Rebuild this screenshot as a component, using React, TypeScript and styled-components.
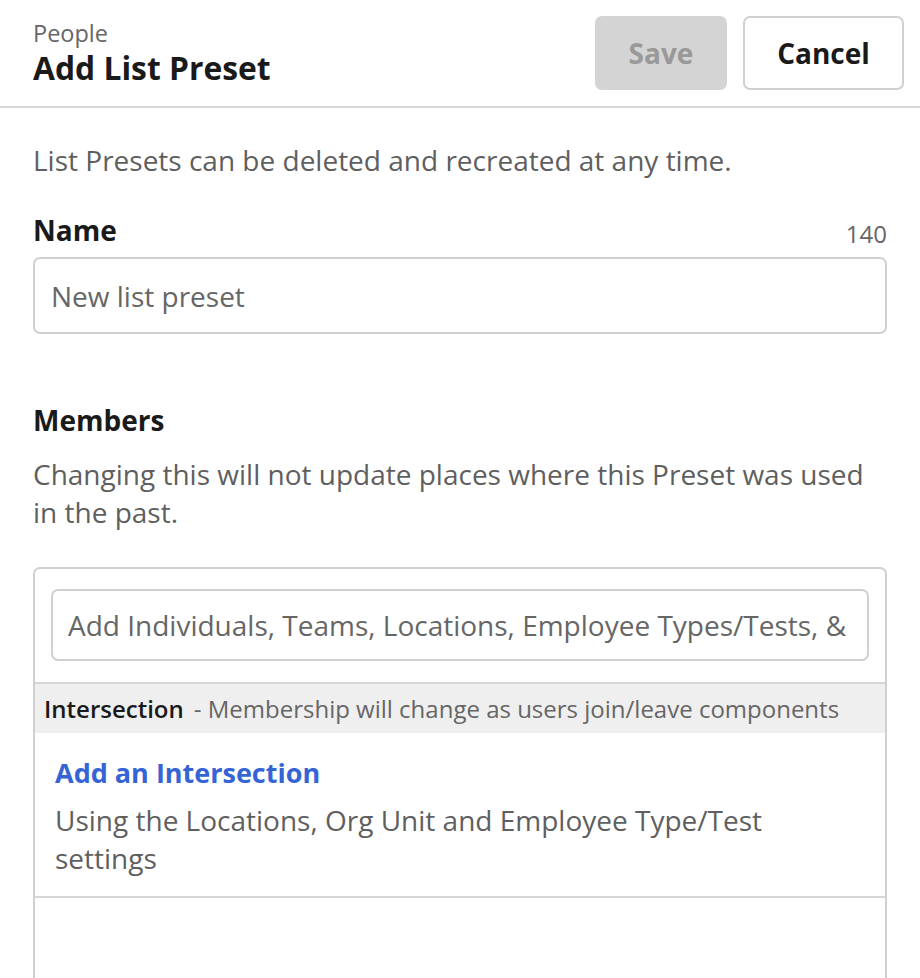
import React from 'react'
import styled, { createGlobalStyle } from 'styled-components'

const GlobalStyle = createGlobalStyle`
    html, body {
        margin: 0;
        padding: 0;
        background: #fff;
    }
    body {
        font-family: "Open Sans", "Noto Sans", sans-serif;
        color: #1a1a1a;
    }
    * {
        box-sizing: border-box;
    }
`

const App: React.FC = () => {
    return (
        <Page>
            <GlobalStyle />
            <Header>
                <Titles>
                    <Crumb>People</Crumb>
                    <Title>Add List Preset</Title>
                </Titles>
                <Actions>
                    <SaveButton disabled>Save</SaveButton>
                    <CancelButton>Cancel</CancelButton>
                </Actions>
            </Header>

            <Body>
                <Hint>List Presets can be deleted and recreated at any time.</Hint>

                <NameField>
                    <LabelRow>
                        <FieldLabel>Name</FieldLabel>
                        <Counter>140</Counter>
                    </LabelRow>
                    <TextInput placeholder="New list preset" />
                </NameField>

                <MembersField>
                    <FieldLabel>Members</FieldLabel>
                    <Description>
                        Changing this will not update places where this Preset was used in the past.
                    </Description>
                    <MembersBox>
                        <SearchWrap>
                            <SearchInput placeholder="Add Individuals, Teams, Locations, Employee Types/Tests, & more" />
                        </SearchWrap>
                        <GroupHeader>
                            <strong>Intersection</strong>
                            <span>- Membership will change as users join/leave components</span>
                        </GroupHeader>
                        <GroupBody>
                            <AddLink href="#">Add an Intersection</AddLink>
                            <GroupNote>Using the Locations, Org Unit and Employee Type/Test settings</GroupNote>
                        </GroupBody>
                        <EmptyArea />
                    </MembersBox>
                </MembersField>
            </Body>
        </Page>
    )
}

const Page = styled.div`
    width: 920px;
    height: 978px;
    overflow: hidden;
    background: #fff;
`

const Header = styled.header`
    display: flex;
    align-items: center;
    justify-content: space-between;
    padding: 16px 16px 16px 33px;
    border-bottom: 2px solid #d6d6d6;
`

const Titles = styled.div`
    display: flex;
    flex-direction: column;
`

const Crumb = styled.span`
    font-size: 23.5px;
    line-height: 30px;
    color: #666;
`

const Title = styled.h1`
    margin: 0;
    font-size: 31.8px;
    line-height: 40px;
    font-weight: 700;
    color: #1a1a1a;
`

const Actions = styled.div`
    display: flex;
    gap: 16px;
`

const Button = styled.button`
    height: 74px;
    padding: 0;
    font-family: inherit;
    font-size: 28px;
    font-weight: 700;
    border-radius: 7px;
    cursor: pointer;
`

const SaveButton = styled(Button)`
    width: 132px;
    background: #d4d4d4;
    border: 2px solid #d4d4d4;
    color: #999;
    cursor: default;
`

const CancelButton = styled(Button)`
    width: 161px;
    background: #fff;
    border: 2px solid #d0d0d0;
    color: #1a1a1a;
`

const Body = styled.main`
    padding: 0 33px;
`

const Hint = styled.p`
    margin: 33px 0 0;
    font-size: 28px;
    line-height: 38px;
    color: #5f5f5f;
`

const NameField = styled.section`
    margin-top: 32px;
`

const MembersField = styled.section`
    margin-top: 67px;
`

const LabelRow = styled.div`
    display: flex;
    justify-content: space-between;
    align-items: flex-end;
    margin-bottom: 8px;
`

const FieldLabel = styled.h2`
    margin: 0;
    font-size: 28px;
    line-height: 38px;
    font-weight: 700;
    color: #1a1a1a;
`

const Counter = styled.span`
    font-size: 24px;
    line-height: 30px;
    color: #666;
`

const TextInput = styled.input`
    display: block;
    width: 100%;
    height: 77px;
    padding: 0 16px;
    border: 2px solid #d0d0d0;
    border-radius: 7px;
    font-family: inherit;
    font-size: 28px;
    color: #1a1a1a;
    &::placeholder {
        color: #666;
    }
`

const Description = styled.p`
    margin: 16px 0 0;
    font-size: 28px;
    line-height: 38px;
    color: #5f5f5f;
`

const MembersBox = styled.div`
    margin-top: 36px;
    border: 2px solid #d0d0d0;
    border-bottom: none;
    border-radius: 7px 7px 0 0;
`

const SearchWrap = styled.div`
    padding: 20px 16px 21px;
`

const SearchInput = styled.input`
    display: block;
    width: 100%;
    height: 72px;
    padding: 0 15px;
    border: 2px solid #d0d0d0;
    border-radius: 7px;
    font-family: inherit;
    font-size: 28px;
    color: #1a1a1a;
    &::placeholder {
        color: #666;
    }
`

const GroupHeader = styled.div`
    display: flex;
    align-items: center;
    gap: 10px;
    height: 51px;
    padding: 0 9px;
    background: #efefef;
    border-top: 2px solid #d6d6d6;
    font-size: 24px;
    color: #666;
    white-space: nowrap;
    overflow: hidden;
    strong {
        font-weight: 600;
        color: #1a1a1a;
    }
`

const GroupBody = styled.div`
    padding: 21px 20px 19px;
    border-bottom: 2px solid #d6d6d6;
`

const AddLink = styled.a`
    display: block;
    font-size: 27px;
    line-height: 38px;
    font-weight: 700;
    color: #3564d6;
    text-decoration: none;
`

const GroupNote = styled.p`
    margin: 9px 0 0;
    font-size: 28px;
    line-height: 38px;
    color: #5f5f5f;
`

const EmptyArea = styled.div`
    height: 120px;
`

export default App
